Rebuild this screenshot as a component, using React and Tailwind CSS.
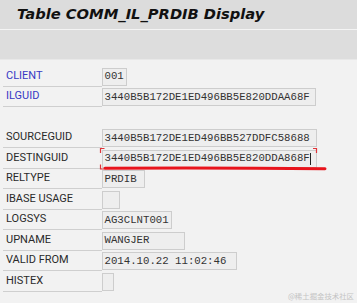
import React from 'react';

const rows = [
  { label: 'CLIENT', value: '001', w: 'w-[25px]', key: true },
  { label: 'ILGUID', value: '3440B5B172DE1ED496BB5E820DDAA68F', w: 'w-[214px]', key: true },
  { spacer: true },
  { label: 'SOURCEGUID', value: '3440B5B172DE1ED496BB527DDFC58688', w: 'w-[215px]' },
  { label: 'DESTINGUID', value: '3440B5B172DE1ED496BB5E820DDA868F', w: 'w-[215px]', cursor: true },
  { label: 'RELTYPE', value: 'PRDIB', w: 'w-[43px]' },
  { label: 'IBASE USAGE', value: '', w: 'w-[18px]' },
  { label: 'LOGSYS', value: 'AG3CLNT001', w: 'w-[70px]' },
  { label: 'UPNAME', value: 'WANGJER', w: 'w-[83px]' },
  { label: 'VALID FROM', value: '2014.10.22 11:02:46', w: 'w-[135px]' },
  { label: 'HISTEX', value: '', w: 'w-[12px]' },
];

const Row = ({ row }) => {
  if (row.spacer) return <div className="h-[20.5px]" />;
  return (
    <div className="flex h-[20.5px]">
      <div
        className={`w-[98.5px] ml-[3px] pl-[3px] flex items-center border-b border-[#cfcfcf] text-[11px] font-['Roboto',sans-serif] ${
          row.key ? 'text-[#3838c4]' : 'text-[#2a2a2a]'
        }`}
      >
        {row.label}
      </div>
      <div className="pt-[1.5px]">
        <div
          className={`${row.w} h-[18px] flex items-center pl-[2px] bg-[#eeeeee] border border-[#cdcdcd] text-[10.7px] text-[#333333] font-['Liberation_Mono',monospace] whitespace-nowrap`}
        >
          {row.value}
          {row.cursor && <span className="w-px h-[12px] bg-[#222222] ml-[0.5px]" />}
        </div>
      </div>
    </div>
  );
};

export default function App() {
  return (
    <div className="relative w-[357px] h-[303px] overflow-hidden bg-[#f2f2f2]">
      {/* Title bar */}
      <div className="h-[29px] bg-[#dcdcdc] flex items-center pl-[17px]">
        <span className="text-[14.7px] font-bold italic text-[#111111] font-['DejaVu_Sans',sans-serif]">
          Table COMM_IL_PRDIB Display
        </span>
      </div>
      <div className="h-px bg-[#f4f4f4]" />
      {/* Toolbar */}
      <div className="h-[30px] bg-[#dddddd] border-b border-[#e8e8e8]" />

      {/* Fields */}
      <div className="pt-[6px]">
        {rows.map((row, i) => (
          <Row key={i} row={row} />
        ))}
      </div>

      {/* Red annotation */}
      <svg className="absolute inset-0 pointer-events-none" width="357" height="303">
        <g stroke="#e0343a" strokeWidth="1.2" fill="none">
          <path d="M100.5 153 V148.5 H104.5" />
          <path d="M100.5 164.5 V169 H104.5" />
          <path d="M313 148.5 H316.5 V153" />
        </g>
        <path d="M105 168.3 Q215 167.6 325 168.8" stroke="#e8141c" strokeWidth="3" strokeLinecap="round" fill="none" />
      </svg>

      {/* Watermark */}
      <div className="absolute right-[3px] bottom-[2px] text-[7.4px] text-[#c4c4c4] font-['Noto_Sans_CJK_SC',sans-serif]">
        @稀土掘金技术社区
      </div>
    </div>
  );
}
